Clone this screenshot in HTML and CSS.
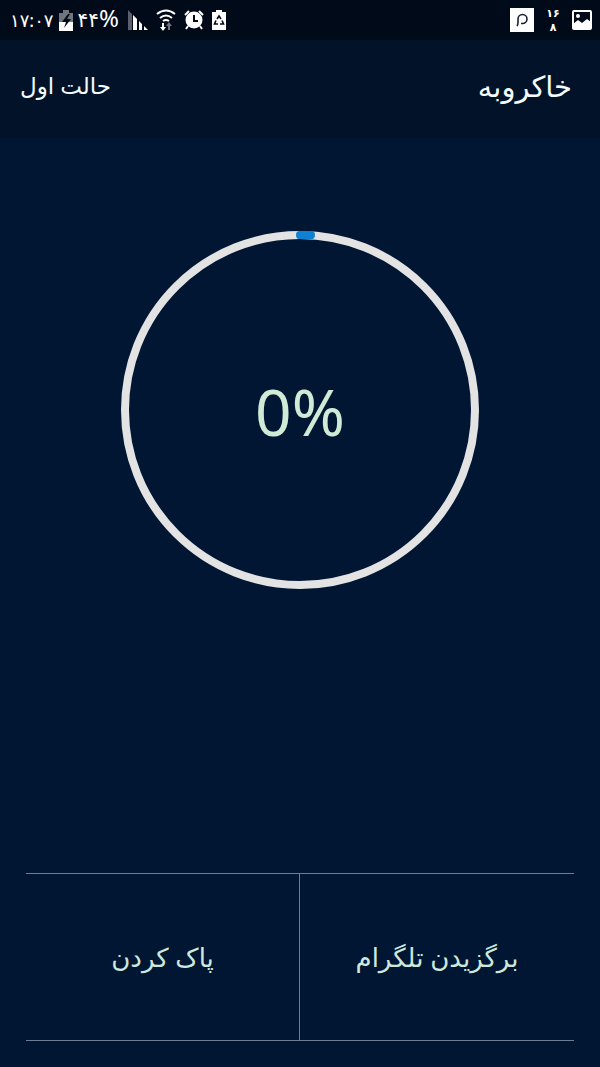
FILE: index.html
```html
<!DOCTYPE html>
<html lang="fa" dir="rtl">
<head>
  <meta charset="UTF-8" />
  <meta name="viewport" content="width=device-width, initial-scale=1.0"/>
  <title>خاکروبه</title>
  <link rel="stylesheet" href="styles.css">
</head>
<body>
  <div class="status-bar" dir="ltr">
    <div class="status-group">
      <span class="clock">۱۷:۰۷</span>
      <svg width="14" height="21" viewBox="0 0 14 21">
        <path d="M4 0h6v3h4v9H0V3h4z" fill="#70747c"/>
        <path d="M0 12h14v9H0z" fill="#fff"/>
        <path d="M9 4L3 12h4l-2 6 7-9H8l3-5z" fill="#020a18"/>
      </svg>
      <span class="level">۴۴<span class="level-sign">%</span></span>
      <div class="status-icons">
        <svg width="20" height="20" viewBox="0 0 20 20">
          <path d="M0 0l4 4v16H0z" fill="#5b606c"/>
          <path d="M5 5l4 4v11H5zM11 11l3 3v6h-3zM16 16l4 4h-4z" fill="#fff"/>
        </svg>
        <svg width="20" height="22" viewBox="0 0 20 22">
          <g fill="none" stroke="#fff" stroke-width="2">
            <path d="M1 5q9-7 18 0"/>
            <path d="M4 9q6-5 12 0"/>
            <path d="M7 12q3-2 6 0"/>
          </g>
          <path d="M6 14h2v4h2l-3 4-3-4h2z" fill="#fff"/>
          <path d="M12 21h2v-4h2l-3-4-3 4h2z" fill="#70747c"/>
        </svg>
        <svg width="20" height="20" viewBox="0 0 20 20">
          <circle cx="10" cy="10" r="8.5" fill="#fff"/>
          <path d="M1 5l4-4M15 1l4 4M4 16l-2 3M16 16l2 3" stroke="#fff" stroke-width="2" fill="none"/>
          <path d="M10 5v6h4" stroke="#020a18" stroke-width="2" fill="none"/>
        </svg>
        <svg width="14" height="20" viewBox="0 0 14 20">
          <path d="M4 0h6v2h4v18H0V2h4z" fill="#fff"/>
          <g fill="none" stroke="#020a18" stroke-width="1.6">
            <path d="M5 9l2-3 2 3"/>
            <path d="M10 10.5l1.5 3.5H8"/>
            <path d="M6 14H2.5L4 10.5"/>
          </g>
        </svg>
      </div>
    </div>
    <div class="status-group status-group-end">
      <svg width="24" height="24" viewBox="0 0 24 24">
        <path d="M0 0h24v24H0z" fill="#fff"/>
        <path d="M7 18q1-1 1-4v-3a4.5 4.5 0 1 1 4.5 4.5H11" fill="none" stroke="#182030" stroke-width="1.6"/>
      </svg>
      <span class="date"><span>۱۶</span><span>۸</span></span>
      <svg width="20" height="20" viewBox="0 0 20 20">
        <rect x="1" y="1" width="18" height="18" rx="1" fill="none" stroke="#fff" stroke-width="2"/>
        <circle cx="6" cy="6" r="2" fill="#fff"/>
        <path d="M1 14l5-4 4 3 5-4 4 3v7H1z" fill="#fff"/>
      </svg>
    </div>
  </div>

  <header>
    <h1>خاکروبه</h1>
    <a class="mode" href="#">حالت اول</a>
  </header>

  <main>
    <div class="progress">
      <svg class="ring" viewBox="0 0 360 360">
        <circle class="ring-track" cx="180" cy="180" r="175"/>
        <path class="ring-value" d="M180 5A175 175 0 0 1 191 5"/>
      </svg>
      <span class="percent" dir="ltr">0%</span>
    </div>
  </main>

  <div class="actions">
    <button type="button">برگزیدن تلگرام</button>
    <button type="button">پاک کردن</button>
  </div>
</body>
</html>
```
FILE: styles.css
```css
* {
  box-sizing: border-box;
}

body {
  display: flex;
  flex-direction: column;
  min-height: 100vh;
  margin: 0;
  background: #001633;
  color: #f4fbff;
  font-family: "Noto Sans", "DejaVu Sans", sans-serif;
}

.status-bar {
  display: flex;
  justify-content: space-between;
  align-items: center;
  height: 40px;
  padding: 0 8px 0 10px;
  background: #010a19;
  color: #fff;
  font-size: 18px;
  line-height: 40px;
}

.status-group {
  display: flex;
  align-items: center;
  gap: 5px;
}

.status-group-end {
  gap: 10px;
}

.status-icons {
  display: flex;
  align-items: center;
  gap: 8px;
  margin-left: 4px;
}

.level {
  font-size: 20px;
}

.level-sign {
  font-size: 24px;
  line-height: 24px;
}

.date {
  display: flex;
  flex-direction: column;
  align-items: center;
  width: 18px;
  font-size: 11px;
  font-weight: bold;
  line-height: 14px;
}

header {
  display: flex;
  justify-content: space-between;
  align-items: center;
  height: 98px;
  padding: 0 28px 8px 20px;
  background: #021228;
}

header h1 {
  margin: 0;
  font-size: 29px;
  font-weight: normal;
}

.mode {
  color: inherit;
  font-size: 23px;
  text-decoration: none;
}

main {
  flex: 1;
  padding-top: 92px;
}

.progress {
  display: grid;
  place-items: center;
  width: 60%;
  margin: 0 auto;
}

.ring,
.percent {
  grid-area: 1 / 1;
}

.ring {
  display: block;
  width: 100%;
}

.ring-track {
  fill: none;
  stroke: #e3e3e3;
  stroke-width: 8;
}

.ring-value {
  fill: none;
  stroke: #1080d0;
  stroke-width: 8;
  stroke-linecap: round;
}

.percent {
  padding-top: 4px;
  color: #d0ead6;
  font-size: 64px;
  line-height: 1;
}

.actions {
  display: grid;
  grid-template-columns: 1fr 1fr;
  margin: 0 26px 26px;
  border-top: 1px solid #6c7d95;
  border-bottom: 1px solid #6c7d95;
}

.actions button {
  height: 166px;
  padding: 0;
  border: none;
  background: none;
  color: #cfe8dc;
  font-family: inherit;
  font-size: 26px;
  cursor: pointer;
}

.actions button + button {
  border-right: 1px solid #6c7d95;
}
```
